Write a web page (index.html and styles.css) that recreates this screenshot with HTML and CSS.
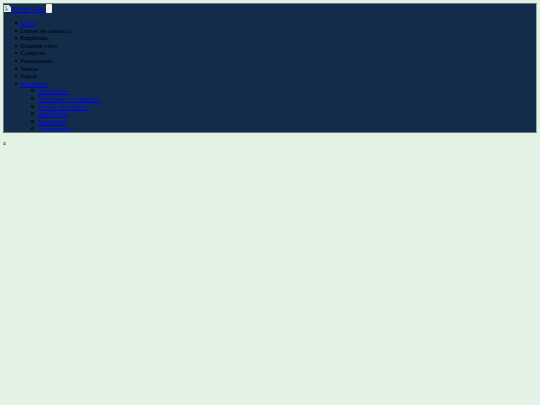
FILE: index.html
```html
<!DOCTYPE html>
<html>
	<head>
		<meta charset="UTF-8">
		<title>Óptica</title>
		<link rel="stylesheet" href="styles.css">
	</head>
	<body>
		<nav class="navbar">
			<div class="brand-row">
				<a href="#" class="brand">
					<svg class="broken-img" viewBox="0 0 8 8">
						<path d="M0 0H5.5L8 2.5V8H0Z" fill="#dfe6e8"/>
						<path d="M1 6L3 3.5L5 6Z" fill="#4f9a58"/>
						<circle cx="2.2" cy="2.2" r="1" fill="#7fa6d8"/>
					</svg>
					<span class="brand-text">Evelyn Logo</span>
				</a>
				<button class="toggler"></button>
			</div>
			<ul class="menu">
				<li><a href="#">Inicio</a></li>
				<li>Lentes de contacto</li>
				<li>Empleado</li>
				<li>Examen vista</li>
				<li>Compras</li>
				<li>Presupuesto</li>
				<li>Ventas</li>
				<li>Pagos</li>
				<li><a href="#">Productos</a>
					<ul class="submenu">
						<li><a href="#">Armazones</a></li>
						<li><a href="#">Soluciones de limpieza</a></li>
						<li><a href="#">Lentes de contacto</a></li>
						<li><a href="#">Accesorios</a></li>
						<li><a href="#">Materiales</a></li>
						<li><a href="#">Tratamientos</a></li>
					</ul>
				</li>
			</ul>
		</nav>
		<p class="page-text">a</p>
	</body>
</html>
```

FILE: styles.css
```css
*{
	margin:0;
	padding:0;
}
body{
	background: #e2f3e6;
	padding: 3px;
	font-family: "Liberation Serif", serif;
	font-size: 6.75px;
	line-height: 7.6px;
	color: #000;
}
a{
	color: #0000ee;
	text-decoration: underline;
}
.navbar{
	background: #132c4a;
	height: 130px;
	border-top: 1px solid #5f7b80;
	border-right: 1px solid #8fb0ad;
	border-bottom: 1px solid #5f7b80;
	border-left: 1px solid #5f7b80;
	box-sizing: border-box;
	overflow: hidden;
}
.brand-row{
	display: flex;
	align-items: flex-start;
	height: 9px;
}
.brand{
	display: flex;
	align-items: center;
	gap: 1px;
	margin-top: 1px;
}
.brand-text{
	font-size: 6.2px;
}
.broken-img{
	width: 7px;
	height: 7px;
}
.toggler{
	width: 6px;
	height: 9px;
	margin-left: 2px;
	background: #f0f0f0;
	border: none;
	border-radius: 1px;
}
.menu{
	margin-top: 6px;
	padding-left: 16.5px;
	list-style: none;
}
.menu li::before{
	content: "";
	display: inline-block;
	width: 2px;
	height: 2px;
	margin-left: -6px;
	margin-right: 4px;
	vertical-align: 1px;
	border-radius: 50%;
	background: #000;
}
.submenu{
	padding-left: 17.5px;
	list-style: none;
}
.menu .submenu li::before{
	background: none;
	border: 0.5px solid #000;
	box-sizing: border-box;
	width: 3px;
	height: 3px;
	margin-left: -7.5px;
	margin-right: 4.5px;
}
.page-text{
	margin-top: 7px;
	font-size: 6px;
}
```
